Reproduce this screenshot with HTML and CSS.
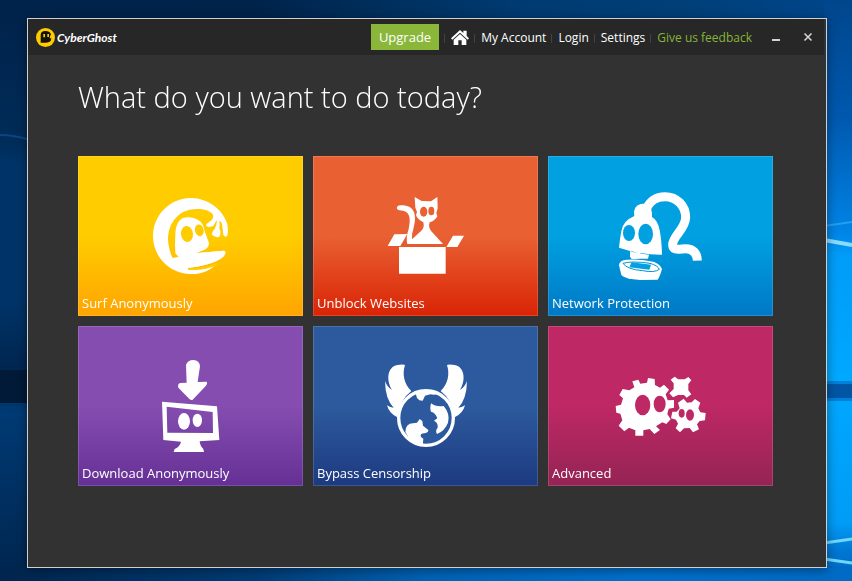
FILE: index.html
```
<!DOCTYPE html>
<html lang="en">
<head>
<meta charset="utf-8">
<title>CyberGhost</title>
<meta name="viewport" content="width=device-width, initial-scale=1">
<link rel="stylesheet" href="styles.css">
</head>
<body>
<svg class="wallpaper" viewBox="0 0 852 581" preserveAspectRatio="none" aria-hidden="true">
  <defs>
    <linearGradient id="top" x1="0" x2="1" y1="0" y2="0"><stop offset="0" stop-color="#00234c"/><stop offset=".3" stop-color="#00234a"/><stop offset=".6" stop-color="#003a70"/><stop offset=".8" stop-color="#003f78"/><stop offset="1" stop-color="#00468c"/></linearGradient>
    <linearGradient id="left" x1="0" x2="0" y1="0" y2="1"><stop offset="0" stop-color="#00234c"/><stop offset=".22" stop-color="#002c58"/><stop offset=".26" stop-color="#003468"/><stop offset=".5" stop-color="#003468"/><stop offset=".62" stop-color="#002650"/><stop offset=".7" stop-color="#003a74"/><stop offset="1" stop-color="#00254e"/></linearGradient>
    <linearGradient id="right" x1="0" x2="0" y1="0" y2="1"><stop offset="0" stop-color="#00468c"/><stop offset=".2" stop-color="#0058ae"/><stop offset=".4" stop-color="#0084e6"/><stop offset=".44" stop-color="#009cf8"/><stop offset=".65" stop-color="#00a8ff"/><stop offset=".9" stop-color="#009cf6"/><stop offset=".95" stop-color="#0076d2"/><stop offset="1" stop-color="#0068c0"/></linearGradient>
    <linearGradient id="bottom" x1="0" x2="1" y1="0" y2="0"><stop offset="0" stop-color="#00254e"/><stop offset=".3" stop-color="#003c76"/><stop offset=".5" stop-color="#0062b4"/><stop offset=".75" stop-color="#0070cc"/><stop offset="1" stop-color="#006ac4"/></linearGradient>
  </defs>
  <rect width="852" height="581" fill="url(#top)"/>
  <rect y="18" width="30" height="563" fill="url(#left)"/>
  <rect x="824" width="28" height="581" fill="url(#right)"/>
  <rect y="566" width="852" height="15" fill="url(#bottom)"/>
  <path d="M0 135Q14 135 30 140" stroke="#0a4684" stroke-width="2" fill="none"/>
  <rect y="370" width="30" height="33" fill="#001a38"/>
  <path d="M824 226l28-4" stroke="#1fa0f0" stroke-width="2"/>
  <path d="M824 240l28 5" stroke="#8adcff" stroke-width="4"/>
  <path d="M824 543l28-4M824 559l28 4" stroke="#6fd8fa" stroke-width="3"/>
  <rect x="824" y="381" width="28" height="20" fill="#0080d6"/>
  <rect x="824" y="384" width="28" height="14" fill="#0056a4"/>
</svg>

<div class="window">
  <header class="titlebar">
    <div class="brand">
      <svg class="brand-mark" viewBox="0 0 57 57" aria-hidden="true">
        <circle cx="28.500" cy="28.500" r="28.500" fill="#fc0"/>
        <path d="M14 44V20Q15 9 28 9Q41 9 45 19Q41 25 41 31H46L44 39Q37 46 14 44Z" fill="#15120a"/>
        <path d="M22 18h5v10h-5zM34 18h5v9h-5z" fill="#fc0"/>
      </svg>
      <span class="brand-name">CyberGhost</span>
    </div>
    <nav class="menu" aria-label="Main">
      <button class="upgrade" type="button">Upgrade</button>
      <a class="item home" href="#" aria-label="Home">
        <svg viewBox="0 0 54 45" aria-hidden="true"><path d="M27 0L37 9V2H47V18L54 25L50 29L27 8L4 29L0 25ZM27 12L46 29V45H32V31H22V45H8V29Z" fill="#fff"/></svg>
      </a>
      <a class="item" href="#">My Account</a>
      <a class="item" href="#">Login</a>
      <a class="item" href="#">Settings</a>
      <a class="item feedback" href="#">Give us feedback</a>
    </nav>
    <div class="controls">
      <button type="button" aria-label="Minimize"><svg viewBox="0 0 10 10" aria-hidden="true"><path d="M1 8h8" stroke="#d4d4d4" stroke-width="2"/></svg></button>
      <button type="button" aria-label="Close"><svg viewBox="0 0 10 10" aria-hidden="true"><path d="M1.500 1.500l7 7M8.500 1.500l-7 7" stroke="#d4d4d4" stroke-width="1.600"/></svg></button>
    </div>
  </header>

  <main class="content">
    <h1>What do you want to do today?</h1>
    <div class="tiles">
      <button class="tile surf" type="button">
        <svg class="icon" viewBox="-15 0 333 330" aria-hidden="true">
          <path class="ink" d="M153 54C205 55 248 88 262 132Q266 158 261 169Q255 173 250 165L247 138Q245 122 238 124Q240 134 238 145Q246 162 237 171Q224 174 215 163Q216 154 224 147Q232 130 230 120Q224 132 220 138L208 141Q196 140 199 132L213 122Q222 112 219 104C209 88 176 84 149 89C110 98 83 134 84 181Q87 214 98 234Q106 237 116 231L106 220Q104 190 106 169Q105 124 131 113Q158 107 180 124Q191 134 193 151L207 189Q207 207 184 213L170 219L252 212Q260 214 254 224C243 243 196 257 145 264Q187 272 224 257C200 277 176 283 151 282C86 280 39 228 39 168C39 105 90 54 153 54Z"/>
          <ellipse class="hole" cx="141" cy="162" rx="18" ry="24" transform="rotate(-8 141 162)"/>
          <ellipse class="hole" cx="178" cy="151" rx="13" ry="18" transform="rotate(-12 178 151)"/>
          <path class="ink" d="M98 234L168 220L252 212Q261 217 251 229C230 250 180 260 143 264Q119 266 98 234Z"/>
          <path class="gap" d="M144 266Q188 271 231 252"/>
        </svg>
        <span class="label">Surf Anonymously</span>
      </button>
      <button class="tile unblock" type="button">
        <svg class="icon" viewBox="-15 -15 333 330" aria-hidden="true">
          <path class="ink" d="M72 186H212V266H72ZM58 148L97 147L76 183H38ZM234 152H267L247 186H214Z"/>
          <path class="ink" d="M97 177Q92 158 101 132C108 100 106 77 73 76Q64 74 66 66Q69 60 78 61C122 61 126 93 115 132Q109 149 111 163L139 137Q149 128 145 112Q134 108 126 97L123 90L126 81L121 68L119 36L140 48L168 49L187 36L188 70L184 84L187 94Q180 108 164 112Q159 127 169 139L204 177Z"/>
          <ellipse class="hole" cx="146" cy="80" rx="11" ry="15"/>
          <ellipse class="hole" cx="169" cy="78" rx="9" ry="13"/>
        </svg>
        <span class="label">Unblock Websites</span>
      </button>
      <button class="tile network" type="button">
        <svg class="icon" viewBox="0 0 333 330" aria-hidden="true">
          <path d="M122 90C135 61 153 50 180 50C216 50 242 78 242 112C242 147 203 168 203 194C203 214 226 206 242 206C264 206 276 218 277 242" fill="none" stroke="#fff" stroke-width="27"/>
          <path class="ink" d="M42 203Q45 174 49 153Q53 123 88 108Q83 78 107 72Q139 67 141 100V111Q158 120 164 151Q170 180 171 224Q107 225 42 203ZM75 214Q88 219 106 217L105 230Q102 237 92 237Q77 237 75 230Z"/>
          <path class="ink" d="M75 217L132 224L129 236H79Z"/>
          <ellipse class="hole" cx="72" cy="159" rx="18" ry="24"/>
          <ellipse class="hole" cx="122" cy="162" rx="22" ry="31"/>
          <path class="ink" d="M65 239Q42 241 42 256L49 285Q58 297 106 300L158 299Q164 291 171 267Q166 254 148 246Q112 236 65 239Z"/>
          <path d="M54 250Q80 242 135 250Q159 257 163 268Q149 279 113 272Q65 268 54 250Z" fill="none" stroke="#0094d7" stroke-width="3"/>
          <path class="hole" d="M80 247L138 254L133 269L73 262Z"/>
        </svg>
        <span class="label">Network Protection</span>
      </button>
      <button class="tile download" type="button">
        <svg class="icon" viewBox="-15 0 333 330" aria-hidden="true">
          <path class="ink" d="M138 45Q143 30 160 30Q179 31 180 49L173 96L200 95Q204 100 198 107L158 149Q154 152 149 148L115 113Q112 102 120 99L140 98Z"/>
          <path class="ink" fill-rule="evenodd" d="M66 155L231 169L238 270L179 274Q180 288 190 297L192 306H101L104 297Q120 290 123 275L70 270ZM80 170L82 248L219 249L218 186Z"/>
          <ellipse class="ink" cx="132" cy="214" rx="18" ry="25"/><ellipse class="ink" cx="172" cy="211" rx="14" ry="20"/>
        </svg>
        <span class="label">Download Anonymously</span>
      </button>
      <button class="tile bypass" type="button">
        <svg class="icon" viewBox="0 0 333 330" aria-hidden="true">
          <path id="wing" class="ink" d="M105 46C96 71 102 103 124 123Q91 147 82 202Q57 190 51 166Q61 173 71 173Q46 148 45 93Q52 112 66 120C47 88 52 45 89 44Q105 43 105 46Z"/>
          <use href="#wing" transform="matrix(-1 0 0 1 336 0)"/>
          <circle class="hole" cx="168" cy="204" r="82" stroke="#fff" stroke-width="10"/>
          <path class="ink" d="M136 127Q169 112 205 132Q192 136 181 133L165 137L158 152L148 151L141 144Z"/>
          <path class="ink" d="M183 160Q197 171 221 168Q241 191 234 218Q225 242 201 252Q195 242 203 233Q205 218 192 212L202 205Q197 188 183 185Q179 176 183 160Z"/>
          <path class="ink" d="M106 246Q107 220 129 220L141 218L149 207L157 213L159 227L175 240Q175 248 164 250Q148 250 153 261L160 266L158 287Q121 280 106 246Z"/>
        </svg>
        <span class="label">Bypass Censorship</span>
      </button>
      <button class="tile advanced" type="button">
        <svg class="icon" viewBox="0 -30 333 330" aria-hidden="true">
          <path class="ink" d="M82 64L100 59L106 71L126 68L129 54L149 57L150 75L165 83L177 74L192 89L182 103L188 121L207 120V143L191 146L187 162L197 178L184 192L172 187L153 199L165 210L148 222L134 207L115 211V227H91V211L72 203L58 214L41 197L52 181L46 161L34 158L32 138L48 134L54 115L43 105L53 87L73 91L88 82Z"/>
          <ellipse class="hole" cx="113" cy="135" rx="23" ry="31"/><ellipse class="hole" cx="164" cy="132" rx="18" ry="25"/>
          <path class="ink" d="M197 59L209 50L220 58L239 58L250 51L259 61L250 72V91L259 103L245 113L237 105L219 105L204 112L193 100L206 87V70Z"/>
          <path class="ink" d="M219 128L236 116L246 128L260 127L270 117L286 128L280 145L286 157L302 159L300 181L284 183L276 193L282 208L264 217L254 204L237 205L225 217L212 205L219 191L213 179L198 175L202 155L215 155L224 145Z"/>
          <ellipse class="hole" cx="230" cy="160" rx="9" ry="13"/><ellipse class="hole" cx="255" cy="165" rx="12" ry="17"/>
        </svg>
        <span class="label">Advanced</span>
      </button>
    </div>
  </main>
</div>
</body>
</html>
```
FILE: styles.css
```
* { box-sizing: border-box; }

body {
  margin: 0;
  min-height: 100vh;
  display: flex;
  padding: 18px 25px 13px 27px;
  background: #003a74;
  color: #fff;
  font-family: "Open Sans", "Noto Sans", sans-serif;
  font-size: 12px;
}

button {
  border: 0;
  padding: 0;
  background: none;
  color: inherit;
  font: inherit;
  cursor: pointer;
}

a { color: inherit; text-decoration: none; }

svg { display: block; }

.wallpaper {
  position: fixed;
  inset: 0;
  width: 100%;
  height: 100%;
  z-index: -1;
}

.window {
  flex: 1;
  background: #323232;
  border: 1px solid #d2d0cc;
  box-shadow: 0 2px 10px rgba(0, 0, 0, .4);
}

.titlebar {
  display: flex;
  align-items: center;
  height: 36px;
  margin-right: 2px;
  padding: 0 6px 0 8px;
  background: #272727;
}

.brand { display: flex; align-items: center; gap: 2px; }
.brand-mark { width: 19px; height: 19px; }
.brand-name { font-family: Lato, sans-serif; font-size: 12px; font-style: italic; font-weight: 700; }

.menu { display: flex; align-items: center; margin-left: auto; }

.upgrade {
  height: 26px;
  padding: 0 8px;
  background: #8ab73a;
  font-size: 13px;
}

.item { display: flex; align-items: center; white-space: nowrap; }
.item::before { content: ""; width: 1px; height: 9px; margin: 2px 6px 0 5px; background: #424242; }
.home svg { width: 18px; height: 15px; }
.feedback { color: #86b539; }

.controls { display: flex; gap: 12px; margin-left: 14px; }
.controls button { display: grid; place-items: center; width: 20px; height: 20px; }
.controls svg { width: 10px; height: 10px; }

.content { padding: 20px 53px 20px 50px; }

h1 {
  margin: 0 0 37px;
  font-size: 29px;
  font-weight: 300;
  line-height: 44px;
}

.tiles { display: grid; grid-template-columns: repeat(3, 1fr); gap: 10px; }

.tile {
  display: flex;
  flex-direction: column;
  justify-content: space-between;
  align-items: center;
  min-height: 160px;
  padding: 23px 3px 2px;
  border: 1px solid rgba(255, 255, 255, .15);
  background: linear-gradient(var(--top) 50%, var(--base)) border-box;
}

.icon { width: 111px; height: 110px; }
.label { align-self: flex-start; font-size: 13px; line-height: 20px; }
.ink { fill: #fff; }
.hole { fill: var(--top); }
.gap { fill: none; stroke: var(--top); stroke-width: 6px; }

.surf { --top: #ffcc00; --base: #ffa400; }
.unblock { --top: #e96033; --base: #d92405; }
.network { --top: #00a0e1; --base: #0078c6; }
.download { --top: #854db0; --base: #653095; }
.bypass { --top: #2d5a9e; --base: #1d3a80; }
.advanced { --top: #be2864; --base: #942454; }
```
